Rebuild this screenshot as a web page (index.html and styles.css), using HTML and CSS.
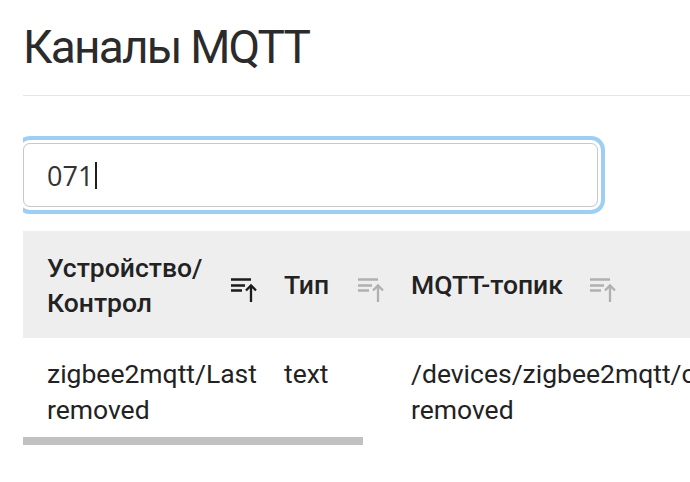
FILE: index.html
```html
<!DOCTYPE html>
<html lang="ru">
<head>
<meta charset="utf-8">
<title>Каналы MQTT</title>
<link rel="stylesheet" href="styles.css">
</head>
<body>
<main class="page">
  <h1 class="title">Каналы MQTT</h1>
  <hr class="divider">
  <div class="search">
    <div class="search-box" role="textbox" aria-label="Поиск"><span class="search-value">071</span><span class="caret"></span></div>
  </div>
  <div class="table-wrap">
    <div class="table">
      <div class="thead">
        <div class="th th-spread">
          <span class="th-label">Устройство/<br>Контрол</span>
          <svg class="sort-icon active" width="28" height="32" viewBox="0 0 28 32" aria-hidden="true">
            <path d="M1 8.5H21M1 14.5H15M1 19.5H12M21 14.5V31M16 19.5L21 14.5L26 19.5" fill="none" stroke="currentColor" stroke-width="2.3"/>
          </svg>
        </div>
        <div class="th th-spread">
          <span class="th-label">Тип</span>
          <svg class="sort-icon" width="28" height="32" viewBox="0 0 28 32" aria-hidden="true">
            <path d="M1 8.5H21M1 14.5H15M1 19.5H12M21 14.5V31M16 19.5L21 14.5L26 19.5" fill="none" stroke="currentColor" stroke-width="2.3"/>
          </svg>
        </div>
        <div class="th">
          <span class="th-label">MQTT-топик</span>
          <svg class="sort-icon" width="28" height="32" viewBox="0 0 28 32" aria-hidden="true">
            <path d="M1 8.5H21M1 14.5H15M1 19.5H12M21 14.5V31M16 19.5L21 14.5L26 19.5" fill="none" stroke="currentColor" stroke-width="2.3"/>
          </svg>
        </div>
      </div>
      <div class="tr">
        <div class="td">zigbee2mqtt/Last removed</div>
        <div class="td">text</div>
        <div class="td">/devices/zigbee2mqtt/controls/Last removed</div>
      </div>
    </div>
    <div class="scrollbar"><div class="scroll-thumb"></div></div>
  </div>
</main>
</body>
</html>
```

FILE: styles.css
```css
* { box-sizing: border-box; }

html, body {
  margin: 0;
  padding: 0;
  background: #ffffff;
  overflow: hidden;
}

body {
  font-family: Roboto, "Noto Sans", sans-serif;
  color: #222222;
}

.page {
  margin-left: 23px;
  width: 720px;
  overflow: hidden;
  padding-top: 24px;
}

.title {
  margin: 0;
  font-size: 46px;
  line-height: 46px;
  font-weight: 400;
  letter-spacing: -1.8px;
  color: #2b2b2b;
}

.divider {
  margin: 25px 0 0 0;
  border: 0;
  height: 1px;
  background: #e6e6e6;
}

.search {
  padding-top: 47px;
  width: 575px;
}

.search-box {
  height: 64px;
  border: 1.5px solid #c9c9c9;
  border-radius: 7px;
  box-shadow: 0 0 0 3px #ffffff, 0 0 0 7px #9ccff3;
  display: flex;
  align-items: center;
  padding-left: 23px;
  font-family: "Open Sans", sans-serif;
  font-size: 27px;
  color: #333333;
}

.caret {
  display: inline-block;
  width: 2px;
  height: 27px;
  margin-left: 2px;
  background: #1f1f1f;
}

.table-wrap {
  margin-top: 24px;
}

.table {
  width: 800px;
}

.thead,
.tr {
  display: grid;
  grid-template-columns: 211px 101px 430px;
  column-gap: 26px;
  padding-left: 24px;
}

.thead {
  background: #eeeeee;
  height: 107px;
  align-items: center;
}

.th {
  display: flex;
  align-items: center;
  gap: 26px;
  font-size: 26.5px;
  line-height: 35px;
  font-weight: 500;
  color: #222222;
}

.th-spread {
  justify-content: space-between;
}

.sort-icon {
  flex: none;
  color: #b0b0b0;
  margin-top: 4px;
}

.sort-icon.active {
  color: #1c1c1c;
}

.tr {
  padding-top: 18px;
  font-size: 26.5px;
  line-height: 36px;
  color: #222222;
}

.td {
  min-width: 0;
}

.scrollbar {
  margin-top: 9px;
  height: 8px;
}

.scroll-thumb {
  width: 340px;
  height: 8px;
  background: #c1c1c1;
}
```
